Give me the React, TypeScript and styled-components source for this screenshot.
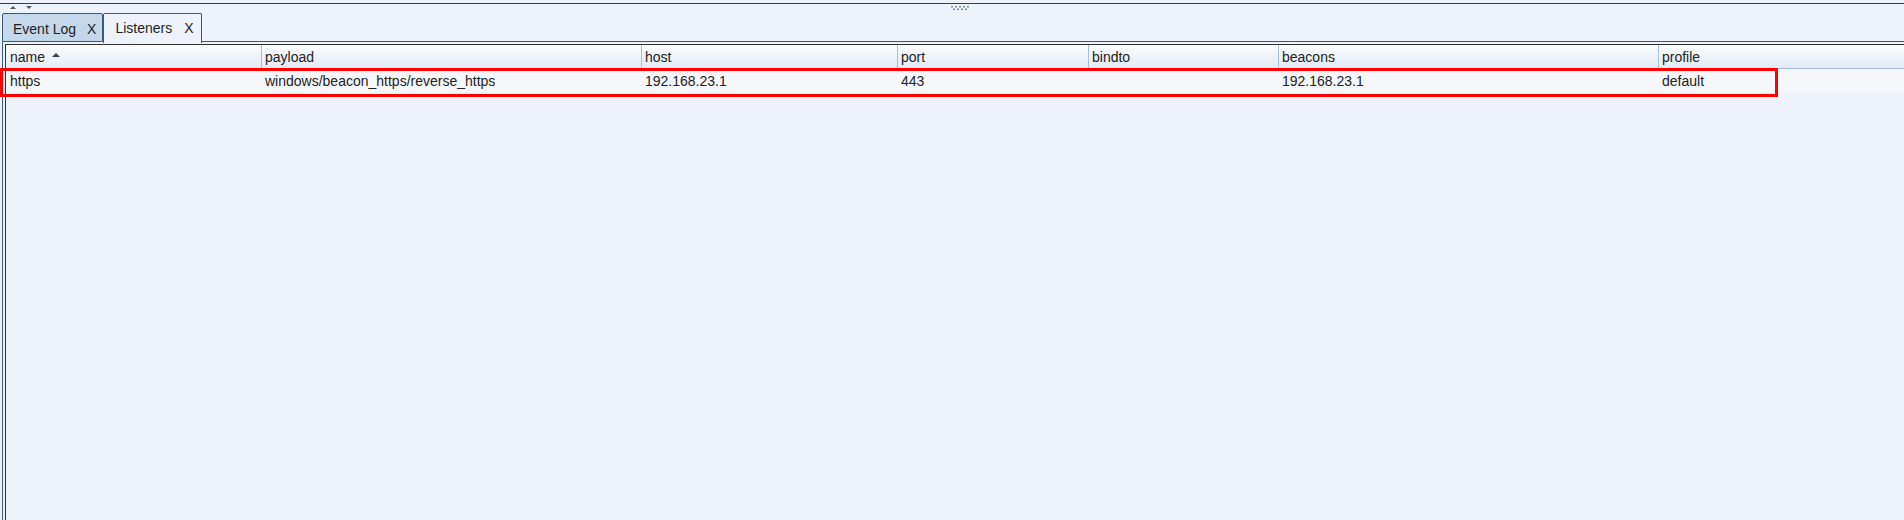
import React from 'react';
import styled, { createGlobalStyle } from 'styled-components';

const GlobalStyle = createGlobalStyle`
  html, body {
    margin: 0;
    padding: 0;
    background: #eef2fa;
  }
  body {
    font-family: "Liberation Sans", Arial, sans-serif;
    color: #222;
  }
`;

interface Column {
  key: string;
  title: string;
  width: string;
  sorted?: boolean;
}

const columns: Column[] = [
  { key: 'name', title: 'name', width: '255px', sorted: true },
  { key: 'payload', title: 'payload', width: '380px' },
  { key: 'host', title: 'host', width: '256px' },
  { key: 'port', title: 'port', width: '191px' },
  { key: 'bindto', title: 'bindto', width: '190px' },
  { key: 'beacons', title: 'beacons', width: '380px' },
  { key: 'profile', title: 'profile', width: '1fr' },
];

type Listener = Record<string, string>;

const listeners: Listener[] = [
  {
    name: 'https',
    payload: 'windows/beacon_https/reverse_https',
    host: '192.168.23.1',
    port: '443',
    bindto: '',
    beacons: '192.168.23.1',
    profile: 'default',
  },
];

const tabs = [
  { id: 'log', label: 'Event Log', active: false },
  { id: 'listeners', label: 'Listeners', active: true },
];

const gridTemplate = columns.map((c) => c.width).join(' ');

const Triangle = ({ down, w, h, color }: { down?: boolean; w: number; h: number; color: string }) => (
  <svg width={w} height={h} viewBox={`0 0 ${w} ${h}`}>
    <polygon
      points={down ? `0,0 ${w},0 ${w / 2},${h}` : `0,${h} ${w},${h} ${w / 2},0`}
      fill={color}
    />
  </svg>
);

const App: React.FC = () => {
  return (
    <>
      <GlobalStyle />
      <Frame>
        <TopStrip />
        <ArrowBar>
          <Arrows>
            <Triangle w={6} h={3} color="#4f5964" />
            <Triangle down w={6} h={3} color="#4f5964" />
          </Arrows>
          <Grip width="20" height="5" viewBox="0 0 20 5">
            {[0, 4, 8, 12, 16].map((x) => (
              <rect key={`a${x}`} x={x} y={0} width={2} height={1.5} fill="#7d8ea8" />
            ))}
            {[2, 6, 10, 14].map((x) => (
              <rect key={`b${x}`} x={x} y={2.5} width={2} height={1.5} fill="#7d8ea8" />
            ))}
          </Grip>
        </ArrowBar>
        <TabBar>
          {tabs.map((t) => (
            <Tab key={t.id} $active={t.active}>
              <span>{t.label}</span>
              <TabClose>X</TabClose>
            </Tab>
          ))}
          <TabFill />
        </TabBar>
        <TabBody>
          <ScrollPane>
            <HeaderRow>
              {columns.map((c, i) => (
                <HeaderCell key={c.key} $first={i === 0}>
                  {c.title}
                  {c.sorted && (
                    <SortMark>
                      <Triangle w={8} h={4} color="#3a3f46" />
                    </SortMark>
                  )}
                </HeaderCell>
              ))}
            </HeaderRow>
            {listeners.map((l) => (
              <DataRow key={l.name}>
                {columns.map((c) => (
                  <DataCell key={c.key}>{l[c.key]}</DataCell>
                ))}
              </DataRow>
            ))}
          </ScrollPane>
        </TabBody>
        <Highlight />
      </Frame>
    </>
  );
};

export default App;

// Styling
const Frame = styled.div`
  position: relative;
  width: 1904px;
  height: 520px;
  overflow: hidden;
  display: flex;
  flex-direction: column;
  background: #eef2fa;
`;

const TopStrip = styled.div`
  height: 3px;
  border-bottom: 1px solid #3c3c3c;
  background: #eef2fa;
`;

const ArrowBar = styled.div`
  position: relative;
  height: 9px;
  display: flex;
  align-items: flex-start;
`;

const Arrows = styled.div`
  display: flex;
  gap: 10px;
  padding-left: 10px;
  padding-top: 2px;
  line-height: 0;
`;

const Grip = styled.svg`
  position: absolute;
  left: 951px;
  top: 2px;
`;

const TabBar = styled.div`
  display: flex;
  align-items: flex-end;
  height: 29px;
  padding-left: 2px;
`;

const Tab = styled.div<{ $active: boolean }>`
  display: flex;
  align-items: center;
  gap: ${(p) => (p.$active ? '12px' : '11px')};
  box-sizing: border-box;
  height: ${(p) => (p.$active ? '30px' : '29px')};
  margin-bottom: ${(p) => (p.$active ? '-1px' : '0')};
  padding: ${(p) => (p.$active ? '0 7px 2px 11px' : '2px 6px 0 10px')};
  border: 1px solid #375a7e;
  border-bottom: ${(p) => (p.$active ? 'none' : '1px solid #375a7e')};
  border-radius: 2px 2px 0 0;
  background: ${(p) => (p.$active ? '#eef2fa' : '#c5d7ea')};
  font-size: 14px;
  color: #1e1e1e;
  position: relative;
  z-index: ${(p) => (p.$active ? 2 : 1)};
`;

const TabClose = styled.span`
  font-size: 14px;
`;

const TabFill = styled.div`
  flex: 1;
  height: 0;
  border-bottom: 1px solid #375a7e;
`;

const TabBody = styled.div`
  flex: 1;
  margin-left: 2px;
  border-left: 1px solid #375a7e;
  padding: 2px 0 0 2px;
  display: flex;
`;

const ScrollPane = styled.div`
  flex: 1;
  border-top: 1px solid #333;
  border-left: 1px solid #333;
  background: #eef2fa;
`;

const HeaderRow = styled.div`
  display: grid;
  grid-template-columns: ${gridTemplate};
  height: 23px;
  border-bottom: 1px solid #9fb9d4;
  background: linear-gradient(#fcfdfe, #e2eaf5);
`;

const HeaderCell = styled.div<{ $first: boolean }>`
  display: flex;
  align-items: center;
  padding-left: ${(p) => (p.$first ? '4px' : '3px')};
  border-left: ${(p) => (p.$first ? 'none' : '1px solid #a7c0da')};
  font-size: 14px;
  color: #222;
  white-space: nowrap;
`;

const SortMark = styled.span`
  display: flex;
  margin-left: 7px;
  margin-top: -3px;
`;

const DataRow = styled.div`
  display: grid;
  grid-template-columns: ${gridTemplate};
  height: 24px;
  background: #f6f7fa;
`;

const DataCell = styled.div`
  display: flex;
  align-items: center;
  padding-left: 4px;
  font-size: 14px;
  color: #222;
  white-space: nowrap;
`;

const Highlight = styled.div`
  position: absolute;
  left: 0;
  top: 68px;
  width: 1778px;
  height: 29px;
  box-sizing: border-box;
  border: 3px solid #ff0000;
  pointer-events: none;
`;
